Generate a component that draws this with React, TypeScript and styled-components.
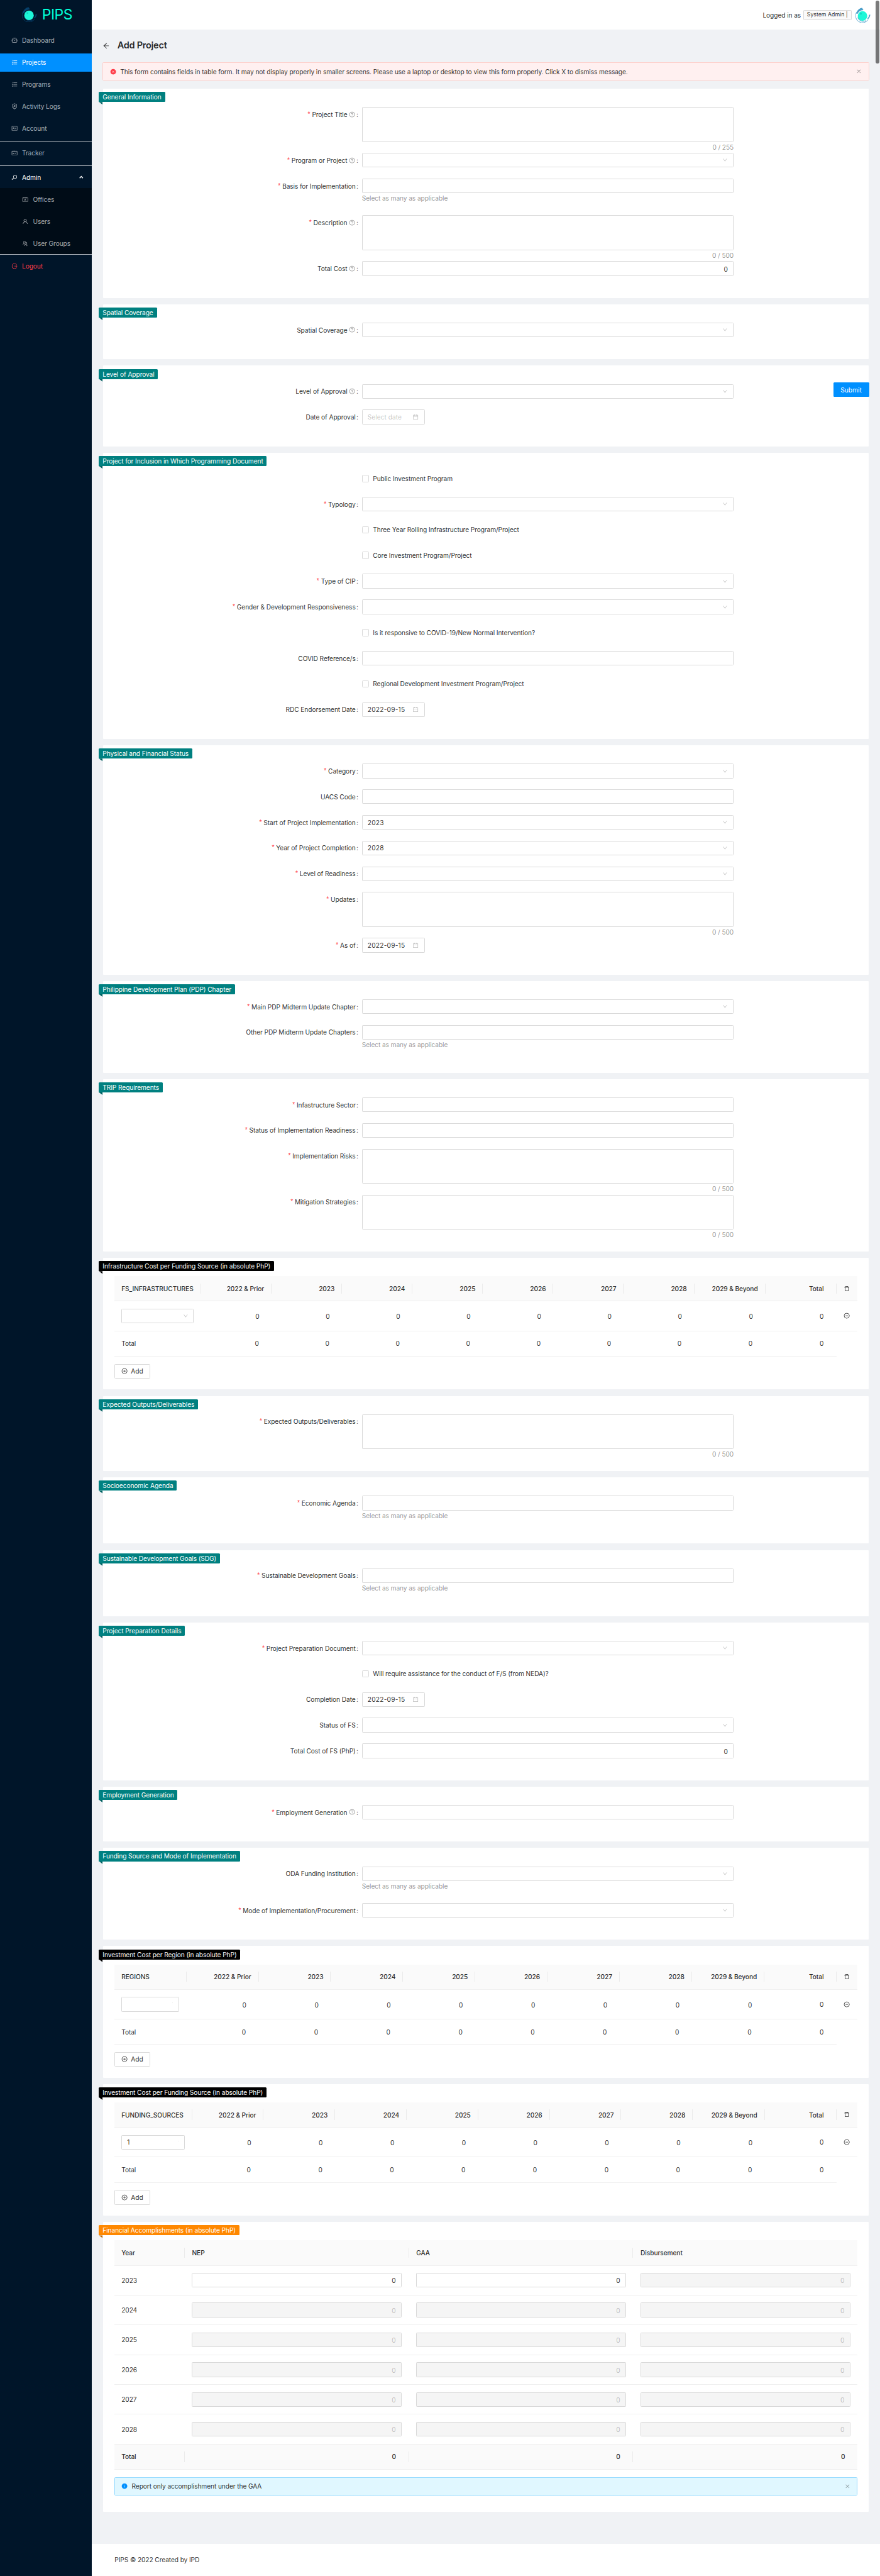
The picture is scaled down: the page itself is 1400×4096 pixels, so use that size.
import React from "react";
import styled, { createGlobalStyle, css } from "styled-components";
import {
  AiOutlineDashboard,
  AiOutlineOrderedList,
  AiOutlineSecurityScan,
  AiOutlineIdcard,
  AiOutlineSchedule,
  AiOutlineKey,
  AiOutlineContacts,
  AiOutlineUser,
  AiOutlineUsergroupAdd,
  AiOutlineLogout,
  AiOutlineArrowLeft,
  AiFillCloseCircle,
  AiOutlineClose,
  AiOutlineDown,
  AiOutlineCalendar,
  AiOutlineQuestionCircle,
  AiOutlineDelete,
  AiOutlineMinusCircle,
  AiOutlinePlusCircle,
  AiFillInfoCircle,
} from "react-icons/ai";

/* The layout is specified on a 1920px wide design grid; u() converts to page pixels. */
const SCALE = 1400 / 1920;
const u = (n: number) => `${+(n * SCALE).toFixed(3)}px`;

const color = {
  primary: "#0090ff",
  text: "rgba(0, 0, 0, 0.85)",
  secondary: "rgba(0, 0, 0, 0.45)",
  disabled: "rgba(0, 0, 0, 0.25)",
  border: "#d9d9d9",
  split: "#f0f0f0",
  canvas: "#f0f2f5",
  teal: "#008080",
};

const GlobalStyle = createGlobalStyle`
  *, *::before, *::after { box-sizing: border-box; }
  html, body { margin: 0; padding: 0; }
  body {
    background: ${color.canvas};
    color: ${color.text};
    font-family: Inter, "Liberation Sans", sans-serif;
    font-size: ${u(14)};
    letter-spacing: -0.01em;
    line-height: ${u(22)};
  }
  svg { display: block; flex: none; }
`;

/* ---------- shell ---------- */

const Shell = styled.div`
  position: relative;
  display: flex;
  width: 1400px;
  height: 4096px;
  overflow: hidden;
`;

const Sider = styled.aside`
  flex: none;
  width: ${u(200)};
  background: #001529;
`;

const Brand = styled.div`
  display: flex;
  align-items: center;
  gap: ${u(10.5)};
  height: ${u(64)};
  padding-left: ${u(48)};
  color: #00ffd8;
  font-size: ${u(31.5)};
  letter-spacing: -0.02em;
  line-height: 1;
`;

const Divider = styled.div`
  height: 1px;
  background: rgba(255, 255, 255, 0.72);
`;

type ItemProps = { $active?: boolean; $danger?: boolean; $bright?: boolean; $nested?: boolean };

const MenuItem = styled.a<ItemProps>`
  display: flex;
  align-items: center;
  gap: ${u(10)};
  height: ${u(40)};
  margin: ${u(4)} 0 ${u(8)};
  padding: 0 ${u(18)} 0 ${(p) => u(p.$nested ? 48 : 24)};
  color: ${(p) =>
    p.$danger ? "#ff3b47" : p.$active || p.$bright ? "#fff" : "rgba(255, 255, 255, 0.65)"};
  background: ${(p) => (p.$active ? color.primary : "transparent")};

  &:last-child {
    margin-bottom: ${u(4)};
  }
`;

const MenuGroup = styled.nav`
  display: flow-root;
`;

const MenuList = styled(MenuGroup)`
  padding-bottom: ${u(4)};
`;

const SubMenu = styled(MenuGroup)`
  background: #000c17;
`;

const MenuText = styled.span`
  flex: 1;
`;

const Main = styled.div`
  display: flex;
  flex: 1;
  flex-direction: column;
  min-width: 0;
`;

const TopBar = styled.header`
  display: flex;
  align-items: center;
  justify-content: flex-end;
  flex: none;
  height: ${u(64)};
  padding: ${u(2)} ${u(21)} 0 0;
  background: #fff;
`;

const RoleTag = styled.span`
  height: ${u(22)};
  margin: 0 ${u(8)} 0 ${u(5)};
  padding: 0 ${u(7)};
  background: #fafafa;
  border: 1px solid ${color.border};
  border-radius: 1.5px;
  font-size: ${u(12)};
  letter-spacing: 0;
  line-height: ${u(19)};
`;

const PageHeader = styled.div`
  display: flex;
  align-items: center;
  gap: ${u(16)};
  flex: none;
  height: ${u(72)};
  padding: 0 ${u(24)};
`;

const PageTitle = styled.h1`
  margin: 0;
  font-size: ${u(20)};
  font-weight: 600;
  line-height: ${u(32)};
  letter-spacing: -0.02em;
`;

const Content = styled.main`
  display: flex;
  flex-direction: column;
  flex: 1;
  padding: 0 ${u(24)};
`;

const AlertBox = styled.div<{ $kind: "error" | "info" }>`
  display: flex;
  align-items: center;
  gap: ${u(8)};
  height: ${u(40)};
  padding: 0 ${u(15)};
  background: ${(p) => (p.$kind === "error" ? "#fff0f0" : "#e0f7ff")};
  border: 1px solid ${(p) => (p.$kind === "error" ? "#ffcfca" : "#8dd8ff")};
  border-radius: 1.5px;

  > svg:first-child {
    color: ${(p) => (p.$kind === "error" ? "#ff3b47" : color.primary)};
  }
`;

const AlertText = styled.span`
  flex: 1;
`;

const Muted = styled.span`
  display: flex;
  color: ${color.secondary};
`;

const Cards = styled.div`
  display: flex;
  flex-direction: column;
  gap: ${u(14)};
  margin: ${u(17.5)} ${u(1)} 0;
`;

const Footer = styled.footer`
  flex: none;
  height: ${u(70)};
  padding: ${u(24)} ${u(50)};
  background: #fff;
`;

const SubmitButton = styled.button`
  position: absolute;
  top: ${u(834)};
  right: ${u(24)};
  width: ${u(78)};
  height: ${u(32)};
  padding: 0;
  color: #fff;
  background: ${color.primary};
  border: 0;
  border-radius: 1.5px;
  font: inherit;
`;

const ScrollThumb = styled.div`
  position: absolute;
  top: ${u(2)};
  right: ${u(2)};
  width: ${u(7.5)};
  height: ${u(136)};
  background: rgba(0, 0, 0, 0.52);
  border-radius: ${u(4)};
`;

/* ---------- card with ribbon ---------- */

const CardBox = styled.section<{ $bottom: number }>`
  position: relative;
  padding: ${u(40)} ${u(24)} ${(p) => u(p.$bottom)};
  background: #fff;
  border-radius: 1px;
`;

const Ribbon = styled.div<{ $tone: string }>`
  position: absolute;
  top: ${u(7)};
  left: ${u(-9)};
  height: ${u(22)};
  padding: 0 ${u(8)};
  color: #fff;
  background: ${(p) => p.$tone};
  border-radius: 1.5px 1.5px 1.5px 0;
  white-space: nowrap;

  &::after {
    content: "";
    position: absolute;
    top: 100%;
    left: 0;
    width: ${u(8)};
    height: ${u(6)};
    background: ${(p) => p.$tone};
    filter: brightness(75%);
    clip-path: polygon(0 0, 100% 0, 100% 100%);
  }
`;

function Card(props: { title: string; tone?: string; bottom?: number; children: React.ReactNode }) {
  return (
    <CardBox $bottom={props.bottom ?? 48}>
      {props.children}
      <Ribbon $tone={props.tone ?? color.teal}>{props.title}</Ribbon>
    </CardBox>
  );
}

/* ---------- form fields ---------- */

const Fields = styled.div`
  display: flex;
  flex-direction: column;
  gap: ${u(24)};
`;

const FieldRow = styled.div`
  display: grid;
  grid-template-columns: 33.333% 50%;
`;

const Label = styled.div`
  display: flex;
  align-items: center;
  justify-content: flex-end;
  height: ${u(32)};
  padding-right: ${u(8)};
  white-space: nowrap;
`;

const Star = styled.span`
  margin-right: ${u(4)};
  color: #ff3b47;
  font-family: "Liberation Sans", sans-serif;
`;

const Hint = styled(Muted)`
  margin-left: ${u(4)};
`;

const Colon = styled.span`
  margin-left: ${u(2)};
`;

const Control = styled.div`
  position: relative;
  display: flex;
  flex-direction: column;
`;

const box = css`
  display: flex;
  align-items: center;
  justify-content: space-between;
  height: ${u(32)};
  padding: 0 ${u(11)};
  background: #fff;
  border: 1px solid ${color.border};
  border-radius: 1.5px;
`;

const InputBox = styled.div<{ $right?: boolean; $disabled?: boolean; $width?: number }>`
  ${box}
  letter-spacing: 0.02em;
  ${(p) => p.$right && "justify-content: flex-end;"}
  ${(p) => p.$width && `width: ${u(p.$width)};`}
  ${(p) => p.$disabled && `background: #f5f5f5; color: ${color.disabled};`}
  padding-top: ${(p) => (p.$right ? u(2) : 0)};

  > svg {
    margin-left: auto;
    color: ${color.disabled};
  }
`;

const Placeholder = styled.span`
  color: rgba(0, 0, 0, 0.25);
  letter-spacing: 0;
`;

const TextArea = styled.div`
  height: ${u(76)};
  background: #fff;
  border: 1px solid ${color.border};
  border-radius: 1.5px;
`;

const Counter = styled.div`
  height: ${u(22)};
  margin-bottom: ${u(-22)};
  color: ${color.secondary};
  text-align: right;
`;

const Extra = styled.div`
  height: ${u(24)};
  color: ${color.secondary};
  line-height: ${u(24)};
`;

const CheckRow = styled.label`
  display: flex;
  align-items: center;
  gap: ${u(8)};
  height: ${u(32)};
  white-space: nowrap;
`;

const CheckSquare = styled.span`
  width: ${u(16)};
  height: ${u(16)};
  border: 1px solid ${color.border};
  border-radius: 1.5px;
`;

type FieldProps = {
  label?: string;
  required?: boolean;
  hint?: boolean;
  kind?: "select" | "input" | "number" | "area" | "date" | "check";
  value?: string;
  limit?: number;
  extra?: boolean;
};

function FieldControl({ kind, value, limit, extra }: FieldProps) {
  switch (kind) {
    case "area":
      return (
        <>
          <TextArea />
          {limit && <Counter>0 / {limit}</Counter>}
        </>
      );
    case "number":
      return <InputBox $right>{value}</InputBox>;
    case "date":
      return (
        <InputBox $width={137}>
          {value ?? <Placeholder>Select date</Placeholder>}
          <AiOutlineCalendar size={u(14)} />
        </InputBox>
      );
    case "check":
      return (
        <CheckRow>
          <CheckSquare />
          {value}
        </CheckRow>
      );
    default:
      return (
        <>
          <InputBox>
            {value}
            {kind === "select" && <AiOutlineDown size={u(12)} />}
          </InputBox>
          {extra && <Extra>Select as many as applicable</Extra>}
        </>
      );
  }
}

function Field(props: FieldProps) {
  return (
    <FieldRow>
      <Label>
        {props.label && (
          <>
            {props.required && <Star>*</Star>}
            {props.label}
            {props.hint && (
              <Hint>
                <AiOutlineQuestionCircle size={u(14)} />
              </Hint>
            )}
            <Colon>:</Colon>
          </>
        )}
      </Label>
      <Control>
        <FieldControl {...props} />
      </Control>
    </FieldRow>
  );
}

function FormCard({ title, fields }: { title: string; fields: FieldProps[] }) {
  return (
    <Card title={title}>
      <Fields>
        {fields.map((f, i) => (
          <Field key={i} {...f} />
        ))}
      </Fields>
    </Card>
  );
}

/* ---------- tables ---------- */

const TableRow = styled.div<{ $cols: string; $tall?: boolean; $shaded?: boolean; $short?: boolean }>`
  display: grid;
  grid-template-columns: ${(p) => p.$cols};
  align-items: center;
  height: ${(p) => u(p.$tall ? 65 : 55)};
  margin-right: ${(p) => (p.$short ? u(46) : 0)};
  background: ${(p) => (p.$shaded ? "#fafafa" : "transparent")};
  border-bottom: 1px solid ${color.split};
`;

const HeadCell = styled.div<{ $right?: boolean; $pad?: number }>`
  display: flex;
  align-items: center;
  justify-content: ${(p) => (p.$right ? "flex-end" : "flex-start")};
  height: ${u(22.4)};
  padding: 0 ${(p) => u(p.$pad ?? 15)} 0 ${u(16)};
  font-weight: 500;
  white-space: nowrap;

  &:not(:last-child) {
    border-right: 1px solid rgba(0, 0, 0, 0.06);
  }
`;

const Cell = styled.div<{ $pad?: number }>`
  padding: 0 ${(p) => u(p.$pad ?? 16)} 0 ${u(16)};
  text-align: ${(p) => (p.$pad ? "right" : "left")};
`;

const NumberCell = styled(Cell)`
  padding-top: ${u(2)};
`;

const IconCell = styled.div`
  display: flex;
  justify-content: center;
`;

const AddButton = styled.button`
  display: flex;
  align-items: center;
  justify-content: center;
  gap: ${u(7)};
  width: ${u(79)};
  height: ${u(32)};
  margin-top: ${u(16)};
  padding: 0;
  color: ${color.text};
  background: #fff;
  border: 1px solid ${color.border};
  border-radius: 1.5px;
  font: inherit;
`;

const ClippedArrow = styled.span`
  display: flex;
  width: ${u(3.2)};
  margin-left: auto;
  overflow: hidden;
  justify-content: flex-end;
  color: ${color.disabled};
`;

const yearHeads = ["2022 & Prior", "2023", "2024", "2025", "2026", "2027", "2028", "2029 & Beyond"];

type CostProps = {
  title: string;
  name: string;
  widths: [number, number, number];
  value?: string;
  clipped?: boolean;
};

function CostCard({ title, name, widths, value, clipped }: CostProps) {
  const [first, year, beyond] = widths;
  const cols = `${u(first)} repeat(7, ${u(year)}) ${u(beyond)} minmax(0, 1fr) ${u(46)}`;
  const footCols = `${u(first)} repeat(7, ${u(year)}) ${u(beyond)} minmax(0, 1fr)`;
  return (
    <Card title={title} tone="#000" bottom={24}>
      <TableRow $cols={cols} $shaded>
        <HeadCell>{name}</HeadCell>
        {yearHeads.map((h) => (
          <HeadCell key={h} $right>
            {h}
          </HeadCell>
        ))}
        <HeadCell $right $pad={26.5}>
          Total
        </HeadCell>
        <IconCell>
          <AiOutlineDelete size={u(14)} />
        </IconCell>
      </TableRow>
      <TableRow $cols={cols} $tall>
        <Cell>
          <InputBox>
            {value}
            {clipped ? (
              <ClippedArrow>
                <AiOutlineDown size={u(12)} />
              </ClippedArrow>
            ) : (
              <AiOutlineDown size={u(12)} />
            )}
          </InputBox>
        </Cell>
        {yearHeads.map((h) => (
          <NumberCell key={h} $pad={27}>
            0
          </NumberCell>
        ))}
        <Cell $pad={28}>0</Cell>
        <IconCell>
          <AiOutlineMinusCircle size={u(14)} />
        </IconCell>
      </TableRow>
      <TableRow $cols={footCols} $short>
        <Cell>Total</Cell>
        {yearHeads.map((h) => (
          <Cell key={h} $pad={28}>
            0
          </Cell>
        ))}
        <Cell $pad={28}>0</Cell>
      </TableRow>
      <AddButton>
        <AiOutlinePlusCircle size={u(14)} />
        Add
      </AddButton>
    </Card>
  );
}

const finCols = `${u(154)} repeat(3, minmax(0, 1fr))`;

const InfoSlot = styled.div`
  margin-top: ${u(16)};
`;

function FinancialCard() {
  return (
    <Card title="Financial Accomplishments (in absolute PhP)" tone="#ff8800" bottom={36}>
      <TableRow $cols={finCols} $shaded>
        {["Year", "NEP", "GAA", "Disbursement"].map((h) => (
          <HeadCell key={h}>{h}</HeadCell>
        ))}
      </TableRow>
      {[2023, 2024, 2025, 2026, 2027, 2028].map((year) => (
        <TableRow key={year} $cols={finCols} $tall>
          <Cell>{year}</Cell>
          {[0, 1, 2].map((col) => (
            <Cell key={col}>
              <InputBox $right $disabled={year > 2023 || col === 2}>
                0
              </InputBox>
            </Cell>
          ))}
        </TableRow>
      ))}
      <TableRow $cols={finCols} $shaded>
        <HeadCell>Total</HeadCell>
        {[0, 1, 2].map((col) => (
          <HeadCell key={col} $right $pad={27}>
            0
          </HeadCell>
        ))}
      </TableRow>
      <InfoSlot>
        <AlertBox $kind="info">
          <AiFillInfoCircle size={u(14)} />
          <AlertText>Report only accomplishment under the GAA</AlertText>
          <Muted>
            <AiOutlineClose size={u(12)} />
          </Muted>
        </AlertBox>
      </InfoSlot>
    </Card>
  );
}

/* ---------- logo ---------- */

function Logo({ light }: { light?: boolean }) {
  const shade = light ? "#4b9fca" : "#06406a";
  return (
    <svg width={u(33)} height={u(33)} viewBox="0 0 33 33" fill="none">
      <path d="M2.4 10A15 15 0 0 0 28 26" stroke={shade} strokeWidth="1.2" />
      <path d="M5 21.5C7.5 28.5 15 32 23.5 28.5" stroke={shade} strokeWidth="1.6" opacity="0.8" />
      <path d="M1.8 13C3.2 6 8.5 1.4 14.5 0.8L17.3 5.4C11 5.6 6.6 8.6 4.2 14Z" fill={shade} />
      <path d="M32.3 15.4C32 20 30 23.4 27 25.4L26 23.6C28.4 21.4 29.4 19 29.6 15.6Z" fill={shade} />
      <circle cx="15.3" cy="18.4" r="10.4" fill="#1df7d8" />
      <circle cx="11.8" cy="13.6" r="1.8" fill="#14cfc2" />
    </svg>
  );
}

/* ---------- data ---------- */

const mainMenu = [
  { icon: AiOutlineDashboard, text: "Dashboard" },
  { icon: AiOutlineOrderedList, text: "Projects", active: true },
  { icon: AiOutlineOrderedList, text: "Programs" },
  { icon: AiOutlineSecurityScan, text: "Activity Logs" },
  { icon: AiOutlineIdcard, text: "Account" },
];

const adminMenu = [
  { icon: AiOutlineContacts, text: "Offices" },
  { icon: AiOutlineUser, text: "Users" },
  { icon: AiOutlineUsergroupAdd, text: "User Groups" },
];

const upperForms: { title: string; fields: FieldProps[] }[] = [
  {
    title: "General Information",
    fields: [
      { label: "Project Title", required: true, hint: true, kind: "area", limit: 255 },
      { label: "Program or Project", required: true, hint: true, kind: "select" },
      { label: "Basis for Implementation", required: true, kind: "input", extra: true },
      { label: "Description", required: true, hint: true, kind: "area", limit: 500 },
      { label: "Total Cost", hint: true, kind: "number", value: "0" },
    ],
  },
  { title: "Spatial Coverage", fields: [{ label: "Spatial Coverage", hint: true, kind: "select" }] },
  {
    title: "Level of Approval",
    fields: [
      { label: "Level of Approval", hint: true, kind: "select" },
      { label: "Date of Approval", kind: "date" },
    ],
  },
  {
    title: "Project for Inclusion in Which Programming Document",
    fields: [
      { kind: "check", value: "Public Investment Program" },
      { label: "Typology", required: true, kind: "select" },
      { kind: "check", value: "Three Year Rolling Infrastructure Program/Project" },
      { kind: "check", value: "Core Investment Program/Project" },
      { label: "Type of CIP", required: true, kind: "select" },
      { label: "Gender & Development Responsiveness", required: true, kind: "select" },
      { kind: "check", value: "Is it responsive to COVID-19/New Normal Intervention?" },
      { label: "COVID Reference/s", kind: "input" },
      { kind: "check", value: "Regional Development Investment Program/Project" },
      { label: "RDC Endorsement Date", kind: "date", value: "2022-09-15" },
    ],
  },
  {
    title: "Physical and Financial Status",
    fields: [
      { label: "Category", required: true, kind: "select" },
      { label: "UACS Code", kind: "input" },
      { label: "Start of Project Implementation", required: true, kind: "select", value: "2023" },
      { label: "Year of Project Completion", required: true, kind: "select", value: "2028" },
      { label: "Level of Readiness", required: true, kind: "select" },
      { label: "Updates", required: true, kind: "area", limit: 500 },
      { label: "As of", required: true, kind: "date", value: "2022-09-15" },
    ],
  },
  {
    title: "Philippine Development Plan (PDP) Chapter",
    fields: [
      { label: "Main PDP Midterm Update Chapter", required: true, kind: "select" },
      { label: "Other PDP Midterm Update Chapters", kind: "input", extra: true },
    ],
  },
  {
    title: "TRIP Requirements",
    fields: [
      { label: "Infastructure Sector", required: true, kind: "input" },
      { label: "Status of Implementation Readiness", required: true, kind: "input" },
      { label: "Implementation Risks", required: true, kind: "area", limit: 500 },
      { label: "Mitigation Strategies", required: true, kind: "area", limit: 500 },
    ],
  },
];

const lowerForms: { title: string; fields: FieldProps[] }[] = [
  {
    title: "Expected Outputs/Deliverables",
    fields: [{ label: "Expected Outputs/Deliverables", required: true, kind: "area", limit: 500 }],
  },
  {
    title: "Socioeconomic Agenda",
    fields: [{ label: "Economic Agenda", required: true, kind: "input", extra: true }],
  },
  {
    title: "Sustainable Development Goals (SDG)",
    fields: [{ label: "Sustainable Development Goals", required: true, kind: "input", extra: true }],
  },
  {
    title: "Project Preparation Details",
    fields: [
      { label: "Project Preparation Document", required: true, kind: "select" },
      { kind: "check", value: "Will require assistance for the conduct of F/S (from NEDA)?" },
      { label: "Completion Date", kind: "date", value: "2022-09-15" },
      { label: "Status of FS", kind: "select" },
      { label: "Total Cost of FS (PhP)", kind: "number", value: "0" },
    ],
  },
  {
    title: "Employment Generation",
    fields: [{ label: "Employment Generation", required: true, hint: true, kind: "input" }],
  },
  {
    title: "Funding Source and Mode of Implementation",
    fields: [
      { label: "ODA Funding Institution", kind: "select", extra: true },
      { label: "Mode of Implementation/Procurement", required: true, kind: "select" },
    ],
  },
];

export default function App() {
  return (
    <>
      <GlobalStyle />
      <Shell>
        <Sider>
          <Brand>
            <Logo />
            PIPS
          </Brand>
          <MenuList>
            {mainMenu.map(({ icon: Icon, text, active }) => (
              <MenuItem key={text} $active={active}>
                <Icon size={u(14)} />
                <MenuText>{text}</MenuText>
              </MenuItem>
            ))}
          </MenuList>
          <Divider />
          <MenuList>
            <MenuItem>
              <AiOutlineSchedule size={u(14)} />
              <MenuText>Tracker</MenuText>
            </MenuItem>
          </MenuList>
          <Divider />
          <MenuGroup>
            <MenuItem $bright>
              <AiOutlineKey size={u(14)} />
              <MenuText>Admin</MenuText>
              <svg width={u(9)} height={u(7)} viewBox="0 0 9 7" fill="none">
                <path d="M1 5.8L4.5 2L8 5.8" stroke="#fff" strokeWidth="2" />
              </svg>
            </MenuItem>
          </MenuGroup>
          <SubMenu>
            {adminMenu.map(({ icon: Icon, text }) => (
              <MenuItem key={text} $nested>
                <Icon size={u(14)} />
                <MenuText>{text}</MenuText>
              </MenuItem>
            ))}
          </SubMenu>
          <Divider />
          <MenuGroup>
            <MenuItem $danger>
              <AiOutlineLogout size={u(14)} />
              <MenuText>Logout</MenuText>
            </MenuItem>
          </MenuGroup>
        </Sider>

        <Main>
          <TopBar>
            Logged in as
            <RoleTag>System Admin |</RoleTag>
            <Logo light />
          </TopBar>
          <PageHeader>
            <AiOutlineArrowLeft size={u(16)} />
            <PageTitle>Add Project</PageTitle>
          </PageHeader>
          <Content>
            <AlertBox $kind="error">
              <AiFillCloseCircle size={u(14)} />
              <AlertText>
                This form contains fields in table form. It may not display properly in smaller
                screens. Please use a laptop or desktop to view this form properly. Click X to
                dismiss message.
              </AlertText>
              <Muted>
                <AiOutlineClose size={u(12)} />
              </Muted>
            </AlertBox>
            <Cards>
              {upperForms.map((f) => (
                <FormCard key={f.title} {...f} />
              ))}
              <CostCard
                title="Infrastructure Cost per Funding Source (in absolute PhP)"
                name="FS_INFRASTRUCTURES"
                widths={[190, 153.7, 155]}
              />
              {lowerForms.map((f) => (
                <FormCard key={f.title} {...f} />
              ))}
              <CostCard
                title="Investment Cost per Region (in absolute PhP)"
                name="REGIONS"
                widths={[158, 157.5, 158.3]}
                clipped
              />
              <CostCard
                title="Investment Cost per Funding Source (in absolute PhP)"
                name="FUNDING_SOURCES"
                widths={[170, 156.1, 157]}
                value="1"
                clipped
              />
              <FinancialCard />
            </Cards>
          </Content>
          <Footer>PIPS © 2022 Created by IPD</Footer>
        </Main>

        <SubmitButton>Submit</SubmitButton>
        <ScrollThumb />
      </Shell>
    </>
  );
}
